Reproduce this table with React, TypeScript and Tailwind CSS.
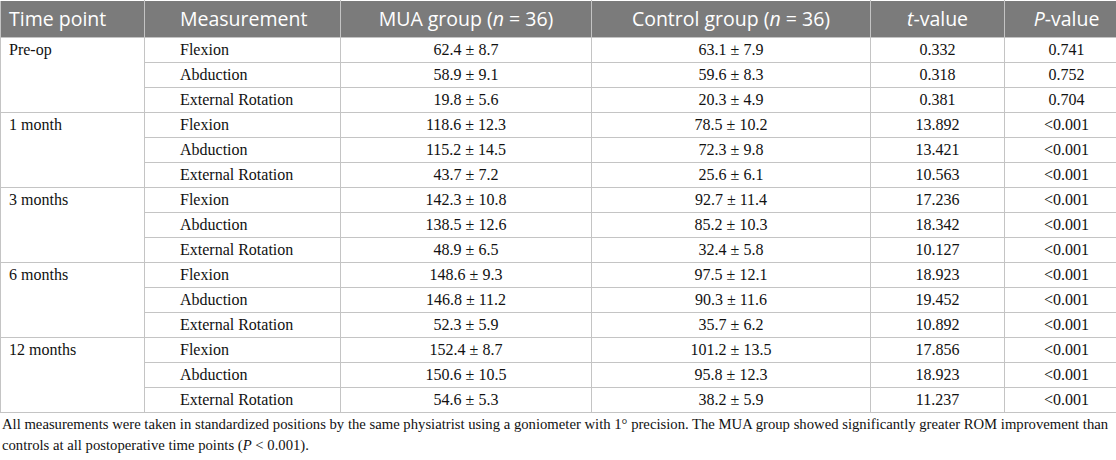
import React from "react";

const groups = [
  {
    t: "Pre-op",
    rows: [
      ["Flexion", "62.4 ± 8.7", "63.1 ± 7.9", "0.332", "0.741"],
      ["Abduction", "58.9 ± 9.1", "59.6 ± 8.3", "0.318", "0.752"],
      ["External Rotation", "19.8 ± 5.6", "20.3 ± 4.9", "0.381", "0.704"],
    ],
  },
  {
    t: "1 month",
    rows: [
      ["Flexion", "118.6 ± 12.3", "78.5 ± 10.2", "13.892", "<0.001"],
      ["Abduction", "115.2 ± 14.5", "72.3 ± 9.8", "13.421", "<0.001"],
      ["External Rotation", "43.7 ± 7.2", "25.6 ± 6.1", "10.563", "<0.001"],
    ],
  },
  {
    t: "3 months",
    rows: [
      ["Flexion", "142.3 ± 10.8", "92.7 ± 11.4", "17.236", "<0.001"],
      ["Abduction", "138.5 ± 12.6", "85.2 ± 10.3", "18.342", "<0.001"],
      ["External Rotation", "48.9 ± 6.5", "32.4 ± 5.8", "10.127", "<0.001"],
    ],
  },
  {
    t: "6 months",
    rows: [
      ["Flexion", "148.6 ± 9.3", "97.5 ± 12.1", "18.923", "<0.001"],
      ["Abduction", "146.8 ± 11.2", "90.3 ± 11.6", "19.452", "<0.001"],
      ["External Rotation", "52.3 ± 5.9", "35.7 ± 6.2", "10.892", "<0.001"],
    ],
  },
  {
    t: "12 months",
    rows: [
      ["Flexion", "152.4 ± 8.7", "101.2 ± 13.5", "17.856", "<0.001"],
      ["Abduction", "150.6 ± 10.5", "95.8 ± 12.3", "18.923", "<0.001"],
      ["External Rotation", "54.6 ± 5.3", "38.2 ± 5.9", "11.237", "<0.001"],
    ],
  },
];

const serif = { fontFamily: '"Liberation Serif", "Times New Roman", serif' };

export default function App() {
  return (
    <div className="w-[1116px] h-[460px] overflow-hidden bg-white text-[#111]">
      <table className="w-[1128px] border-collapse table-fixed" style={serif}>
        <colgroup>
          <col className="w-[144px]" />
          <col className="w-[196px]" />
          <col className="w-[251px]" />
          <col className="w-[279px]" />
          <col className="w-[134px]" />
          <col className="w-[124px]" />
        </colgroup>
        <thead>
          <tr
            className="h-[37px] bg-[#7b7b7b] text-white text-[19.5px] font-normal"
            style={{ fontFamily: '"Open Sans", "Noto Sans", sans-serif' }}
          >
            <th className="border border-[#c4c4c4] border-t-white text-left font-normal pl-[8px] leading-[24px]">Time point</th>
            <th className="border border-[#c4c4c4] border-t-white text-left font-normal pl-[35px] leading-[24px]">Measurement</th>
            <th className="border border-[#c4c4c4] border-t-white text-center font-normal leading-[24px]">
              MUA group (<i>n</i> = 36)
            </th>
            <th className="border border-[#c4c4c4] border-t-white text-center font-normal leading-[24px]">
              Control group (<i>n</i> = 36)
            </th>
            <th className="border border-[#c4c4c4] border-t-white text-center font-normal leading-[24px]">
              <i>t</i>-value
            </th>
            <th className="border border-[#c4c4c4] border-t-white text-center font-normal leading-[24px]">
              <i>P</i>-value
            </th>
          </tr>
        </thead>
        <tbody className="text-[16px]" style={serif}>
          {groups.map((g) =>
            g.rows.map((r, i) => (
              <tr key={g.t + i} className="h-[25px]">
                {i === 0 && (
                  <td rowSpan={3} className="border border-[#c4c4c4] align-top pl-[8px] pt-[2px] leading-[20px]">
                    {g.t}
                  </td>
                )}
                <td className="border border-[#c4c4c4] pl-[35px] leading-[20px]">{r[0]}</td>
                <td className="border border-[#c4c4c4] text-center leading-[20px]">{r[1]}</td>
                <td className="border border-[#c4c4c4] text-center leading-[20px]">{r[2]}</td>
                <td className="border border-[#c4c4c4] text-center leading-[20px]">{r[3]}</td>
                <td className="border border-[#c4c4c4] text-center leading-[20px]">{r[4]}</td>
              </tr>
            ))
          )}
        </tbody>
      </table>
      <p className="mt-[1px] pl-[2px] text-[14.7px] leading-[21px] whitespace-nowrap" style={serif}>
        All measurements were taken in standardized positions by the same physiatrist using a goniometer with 1° precision. The MUA group showed significantly greater ROM improvement than
        <br />
        controls at all postoperative time points (<i>P</i> &lt; 0.001).
      </p>
    </div>
  );
}
